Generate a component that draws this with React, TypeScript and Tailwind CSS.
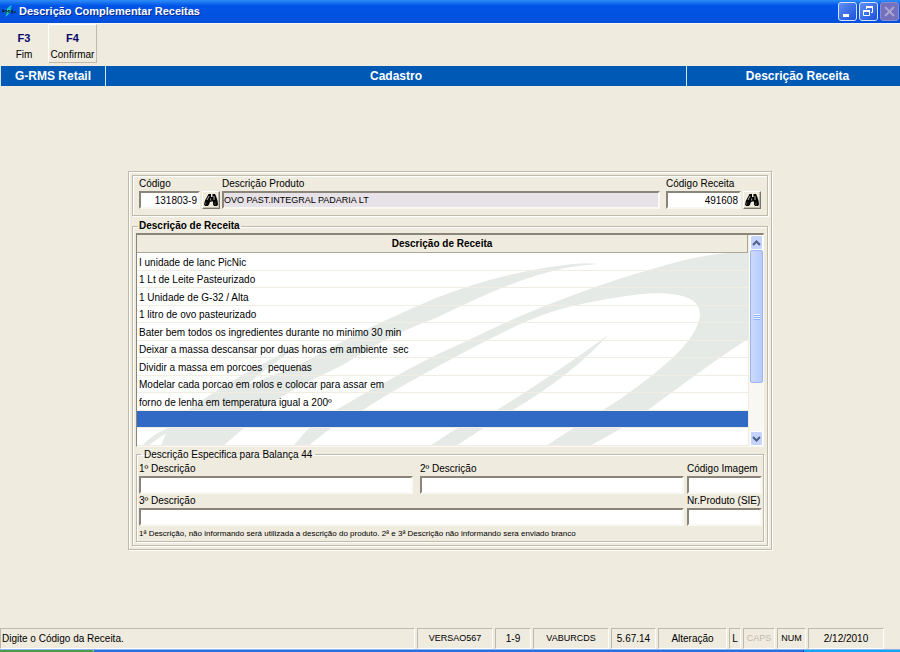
import { ReactNode } from "react";

const recipeLines = [
    "I unidade de lanc PicNic",
    "1 Lt de Leite Pasteurizado",
    "1 Unidade de G-32 / Alta",
    "1 litro de ovo pasteurizado",
    "Bater bem todos os ingredientes durante no minimo 30 min",
    "Deixar a massa descansar por duas horas em ambiente  sec",
    "Dividir a massa em porcoes  pequenas",
    "Modelar cada porcao em rolos e colocar para assar em",
    "forno de lenha em temperatura igual a 200º",
    "",
    "",
];
const selectedLine = 9;

const groove = "border border-[#bfbbaa] shadow-[1px_1px_0_#fff,inset_1px_1px_0_#fff]";
const sunken = "h-[18px] w-full border-2 border-t-[#89857a] border-l-[#89857a] border-r-[#faf8f2] border-b-[#faf8f2] outline-none";

function Binoculars() {
    return (
        <svg viewBox="0 0 14 12" className="h-3 w-3.5" aria-hidden="true">
            <path d="M4.500 0H7v3h1.500V0H11l1 2 1.500 4.500.5 4-1 1.500h-3L9 10.500V7.500H7.500L6 8 5 10.500 4 12H1L0 10.500 1 6.500 3.500 2z" fill="#050505" />
            <path d="M5 2 3 6M10 2v4M6.700 4.500v2" stroke="#dedbd0" strokeWidth="0.8" fill="none" />
            <path d="M2 8.500l-.5 2.300M11 8.500v2.300" stroke="#8b897f" strokeWidth="0.6" />
        </svg>
    );
}

function SearchButton({ label }: { label: string }) {
    return (
        <button
            aria-label={label}
            className="flex h-[18px] w-[18px] shrink-0 items-center justify-center border border-t-white border-l-white border-r-[#77746a] border-b-[#77746a] bg-[#efebde] shadow-[inset_-1px_-1px_0_#bfbbaa]"
        >
            <Binoculars />
        </button>
    );
}

function Field({ id, label, className }: { id: string; label: string; className?: string }) {
    return (
        <div className={className}>
            <label htmlFor={id} className="block h-[14px] leading-[14px] whitespace-nowrap">{label}</label>
            <input id={id} className={`${sunken} block bg-white`} />
        </div>
    );
}

function StatusCell({ children, className }: { children: ReactNode; className: string }) {
    return (
        <div className={`flex items-center border border-t-[#bfbbaa] border-l-[#bfbbaa] border-r-white border-b-white ${className}`}>
            {children}
        </div>
    );
}

function TitleBar() {
    const btn = "flex h-[19px] w-[19px] items-center justify-center rounded-[3px] border";
    return (
        <header className="flex h-6 items-center justify-between border-b border-[#f8f6ee] bg-linear-to-b from-[#2f8cf8] via-[#0054e6] via-25% to-[#0450dc] pr-px pl-0.5">
            <div className="flex items-center gap-[3px]">
                <svg viewBox="0 0 14 13" className="h-[13px] w-3.5" aria-hidden="true">
                    <path d="M3 8Q5 2 10 0L8 4l2-.5Q8 9 3 12l2-4z" fill="#16c7c9" />
                    <path d="M0 8V5h2v1.500H0M4 8V5l1.500 2L7 5v3M11 5H9v1.500h2V8H9M12 7h2" stroke="#06262e" strokeWidth="1" fill="none" />
                </svg>
                <h1 className="text-[11px] font-bold text-white [text-shadow:1px_1px_0_#0a2a8c]">Descrição Complementar Receitas</h1>
            </div>
            <div className="flex gap-0.5">
                <button aria-label="Minimizar" className={`${btn} border-[#d5e2fb] bg-linear-to-br from-[#5f8ff5] to-[#1c4fd8]`}>
                    <svg viewBox="0 0 17 17" className="h-[17px] w-[17px]"><path d="M4 11h6v3H4z" fill="#fff" /></svg>
                </button>
                <button aria-label="Restaurar" className={`${btn} border-[#d5e2fb] bg-linear-to-br from-[#5f8ff5] to-[#1c4fd8]`}>
                    <svg viewBox="0 0 17 17" className="h-[17px] w-[17px]" fill="none" stroke="#fff">
                        <path d="M6.500 6V4.500h6v5H11" />
                        <path d="M6 4h7" strokeWidth="2" />
                        <path d="M3.500 8v4.500h6V8" />
                        <path d="M3 8h7" strokeWidth="2" />
                    </svg>
                </button>
                <button aria-label="Fechar" disabled className={`${btn} border-[#8d8ccb] bg-[#7371bd]`}>
                    <svg viewBox="0 0 17 17" className="h-[17px] w-[17px]"><path d="M4 4l9 9M13 4l-9 9" stroke="#a9a7d2" strokeWidth="2" /></svg>
                </button>
            </div>
        </header>
    );
}

function Watermark() {
    return (
        <svg viewBox="0 0 611 193" preserveAspectRatio="none" className="absolute inset-x-0 top-[18px] h-[193px] w-full" fill="#e5eae6" aria-hidden="true">
            <path d="M462 11Q445 9 428 12C380 18 340 29 299 45C268 58 240 71 212 85Q185 100 158 114L110 132Q138 108 167 90Q110 116 51 157L31 175 24 193H86L107 175 124 157C150 139 178 125 206 112C236 92 268 76 299 65C345 43 385 24 428 15Q445 12 462 11Z" />
            <path d="M5 193Q14 182 33 174L36 176Q22 184 11 193Z" />
            <path d="M611 0H590C572 2 555 5 540 9C510 17 470 29 442 40C420 48 400 56 381 64C350 78 325 90 299 102C262 121 230 139 199 157L172 175 156 193H171L194 175 226 157C250 141 272 129 296 116C325 100 350 87 377 74C412 57 448 49 483 44C505 40 525 39 541 42Q563 46 563 62C561 86 528 113 505 130C492 140 478 150 466 157C448 168 428 180 409 193H453L483 176C530 145 565 115 611 86Z" />
            <path d="M471 82C440 105 400 132 360 157L317 177 293 193H319L345 176 376 157Q435 122 471 82Z" />
        </svg>
    );
}

function RecipeTable() {
    return (
        <div className="flex border-t-2 border-r border-b border-l border-t-[#89857a] border-r-[#faf8f2] border-b-[#faf8f2] border-l-[#89857a] bg-white">
            <div className="relative min-w-0 flex-1 overflow-hidden">
                <Watermark />
                <table className="relative w-full table-fixed border-separate border-spacing-0 text-left">
                    <thead>
                        <tr>
                            <th className="h-[18px] border-r border-b border-[#aca899] bg-[#efebde] p-0 text-center text-[10px] leading-4 font-bold">Descrição de Receita</th>
                        </tr>
                    </thead>
                    <tbody>
                        {recipeLines.map((line, i) => (
                            <tr key={i} className={i === selectedLine ? "bg-[#316ac5]" : ""}>
                                <td className={`border-b border-[#f1ede2] pt-px pr-0 pb-0 pl-[2px] leading-[15px] whitespace-pre ${i % 2 === 0 ? "h-[18px]" : "h-[17px]"}`}>{line}</td>
                            </tr>
                        ))}
                    </tbody>
                </table>
            </div>
            <div className="flex w-[15px] flex-col border-l border-[#efebde] bg-[#f8f7f4] pl-px">
                <button aria-label="Subir" className="flex h-[15px] items-center justify-center rounded-[2px] border border-white bg-[#c4d4fd]">
                    <svg viewBox="0 0 9 6" className="h-1.5 w-[9px]"><path d="M1 5l3.500-3.500L8 5" fill="none" stroke="#4d6185" strokeWidth="2" /></svg>
                </button>
                <div className="flex h-[133px] flex-col items-center justify-center gap-px rounded-[2px] border border-[#9db5ee] bg-linear-to-r from-[#cbdafe] to-[#b7cafb]">
                    {[0, 1, 2].map((n) => (
                        <span key={n} className="h-px w-1.5 bg-[#eef4fe] shadow-[0_1px_0_#8cb0f8]" />
                    ))}
                </div>
                <button aria-label="Descer" className="mt-auto flex h-[15px] items-center justify-center rounded-[2px] border border-white bg-[#c4d4fd]">
                    <svg viewBox="0 0 9 6" className="h-1.5 w-[9px]"><path d="M1 1l3.500 3.500L8 1" fill="none" stroke="#4d6185" strokeWidth="2" /></svg>
                </button>
            </div>
        </div>
    );
}

export default function App() {
    return (
        <div className="flex min-h-screen flex-col bg-[#efebde] font-['Liberation_Sans',Arial,sans-serif] text-[10px] text-black">
            <TitleBar />

            <div className="flex h-[42px]">
                <button className="flex w-12 flex-col items-center pt-2">
                    <span className="text-[11px] leading-3 font-bold text-[#08086b]">F3</span>
                    <span className="mt-1 leading-[14px]">Fim</span>
                </button>
                <button className="flex h-[39px] w-[49px] flex-col items-center border border-t-white border-l-white border-r-[#bfbbaa] border-b-[#bfbbaa] pt-[7px]">
                    <span className="text-[11px] leading-3 font-bold text-[#08086b]">F4</span>
                    <span className="mt-1 leading-[14px]">Confirmar</span>
                </button>
            </div>

            <div className="flex h-5 items-center bg-[#005ab5] text-center text-[12px] leading-5 font-bold text-white">
                <div className="w-[106px] border-x border-[#d5e3f0]">G-RMS Retail</div>
                <div className="flex-1">Cadastro</div>
                <div className="w-[214px] border-l border-[#d5e3f0] pl-2">Descrição Receita</div>
            </div>

            <main className="flex-1 px-32 pt-[85px] pb-10">
                <div className={`${groove} p-[3px]`}>
                    <div className={`${groove} flex h-[41px] items-end px-1.5 pb-1.5`}>
                        <div className="w-[61px]">
                            <label htmlFor="codigo" className="block leading-[14px]">Código</label>
                            <input id="codigo" defaultValue="131803-9" className={`${sunken} block bg-white pr-px text-right`} />
                        </div>
                        <div className="ml-0.5"><SearchButton label="Buscar código" /></div>
                        <div className="ml-0.5 min-w-0 flex-1">
                            <label htmlFor="produto" className="block leading-[14px]">Descrição Produto</label>
                            <input id="produto" readOnly defaultValue="OVO PAST.INTEGRAL PADARIA LT" className={`${sunken} block bg-[#e7e2e7] text-[9px]`} />
                        </div>
                        <div className="ml-1.5 w-[75px]">
                            <label htmlFor="receita" className="block leading-[14px]">Código Receita</label>
                            <input id="receita" defaultValue="491608" className={`${sunken} block bg-white pr-px text-right`} />
                        </div>
                        <div className="ml-0.5"><SearchButton label="Buscar receita" /></div>
                    </div>

                    <fieldset className={`${groove} mt-[3px] px-[3px] pb-[3px]`}>
                        <legend className="ml-0.5 px-px text-[10px] leading-[14px] font-bold">Descrição de Receita</legend>
                        <RecipeTable />

                        <fieldset className={`${groove} pr-px pb-px pl-0.5`}>
                            <legend className="ml-0.5 px-[3px] leading-[15px]">Descrição Especifica para Balança 44</legend>
                            <div className="grid grid-cols-[278fr_264fr_75px] gap-x-[3px]">
                                <Field id="desc1" label="1º Descrição" className="pr-1" />
                                <Field id="desc2" label="2º Descrição" />
                                <Field id="imagem" label="Código Imagem" />
                                <Field id="desc3" label="3º Descrição" className="col-span-2" />
                                <Field id="sie" label="Nr.Produto (SIE)" />
                            </div>
                            <p className="pt-px text-[8px] leading-[13px]">
                                1ª Descrição, não informando será utilizada a descrição do produto. 2ª e 3ª Descrição não informando sera enviado branco
                            </p>
                        </fieldset>
                    </fieldset>
                </div>
            </main>

            <footer>
                <div className="flex h-[21px] gap-0.5 pr-4">
                    <StatusCell className="flex-1 pl-px">Digite o Código da Receita.</StatusCell>
                    <StatusCell className="w-[76px] justify-center text-[9px]">VERSAO567</StatusCell>
                    <StatusCell className="w-9 justify-center">1-9</StatusCell>
                    <StatusCell className="w-[76px] justify-center text-[9px]">VABURCDS</StatusCell>
                    <StatusCell className="w-[45px] justify-center">5.67.14</StatusCell>
                    <StatusCell className="w-[69px] justify-center">Alteração</StatusCell>
                    <StatusCell className="w-3 justify-center">L</StatusCell>
                    <StatusCell className="w-8 justify-center text-[9px] text-[#bfbbaa]">CAPS</StatusCell>
                    <StatusCell className="w-[29px] justify-center text-[9px]">NUM</StatusCell>
                    <StatusCell className="w-[76px] justify-center">2/12/2010</StatusCell>
                </div>
                <div className="flex h-[3px] border-t border-[#8fb4ee]">
                    <div className="w-[94px] rounded-tr-[2px] bg-[#4d9a4a]" />
                    <div className="flex-1 bg-[#2a6fdc]" />
                    <div className="w-[97px] border-l border-[#0b4f9e] bg-[#12a8f0]" />
                </div>
            </footer>
        </div>
    );
}
